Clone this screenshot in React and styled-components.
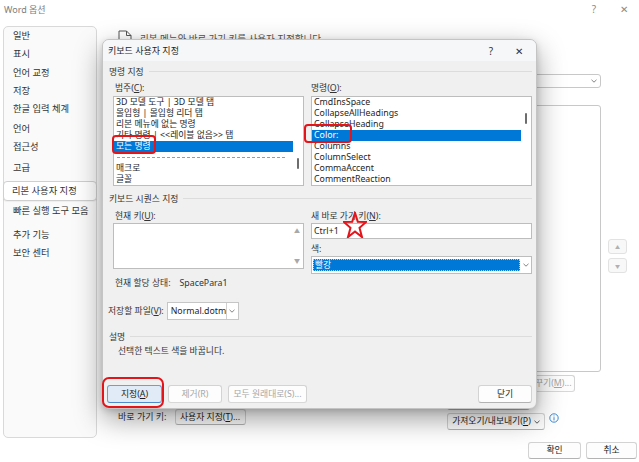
import React from "react";
import styled, { createGlobalStyle } from "styled-components";

const Global = createGlobalStyle`
  html, body { margin: 0; padding: 0; background: #fff; }
  body { font-family: "Noto Sans", "Noto Sans CJK KR", sans-serif; }
  * { box-sizing: border-box; }
  u { text-decoration: underline; text-underline-offset: 1px; }
`;

const Page = styled.div`
  position: relative;
  width: 639px;
  height: 462px;
  overflow: hidden;
  background: #fff;
  color: #222;
  font-size: 9px;
  font-family: "Noto Sans", "Noto Sans CJK KR", sans-serif;
`;

const WinHeader = styled.div`
  height: 22px;
  display: flex;
  align-items: center;
  justify-content: space-between;
  padding: 0 11px 4px 4px;
`;
const WinTitle = styled.div`
  color: #7d7d7d;
  font-size: 9px;
`;
const HeaderControls = styled.div`
  display: flex;
  align-items: center;
  gap: 24px;
  color: #8a8a8a;
  font-size: 10px;
`;

const Body = styled.div`
  display: flex;
  padding-left: 3px;
`;

const Nav = styled.div`
  margin-top: 4px;
  width: 94px;
  height: 412px;
  border: 1px solid #d9d9d9;
  border-radius: 5px;
  background: #fafafa;
  display: flex;
  flex-direction: column;
`;
const NavItem = styled.div`
  height: ${(p) => (p.$sel ? 20 : 18)}px;
  line-height: 18px;
  margin-top: ${(p) => p.$mt || 0}px;
  padding-left: ${(p) => (p.$sel ? 8 : 9)}px;
  color: #333;
  font-size: 9.3px;
  white-space: nowrap;
  ${(p) =>
    p.$sel &&
    `background:#fff;border:1px solid #cfcfcf;border-radius:4px;margin-left:-1px;margin-right:-1px;box-shadow:0 1px 1px rgba(0,0,0,0.05);`}
`;

const Main = styled.div`
  flex: 1;
  display: flex;
  flex-direction: column;
`;
const DocRow = styled.div`
  margin: 8px 0 0 21px;
  height: 15px;
  display: flex;
  align-items: center;
  gap: 8px;
  color: #555;
  font-size: 9.5px;
`;
const RightCol = styled.div`
  margin-left: 253px;
  display: flex;
  flex-direction: column;
`;
const Dropdown = styled.div`
  margin-top: 29px;
  width: 251px;
  height: 14px;
  border: 1px solid #c8c8c8;
  border-radius: 3px;
  background: #fff;
  display: flex;
  align-items: center;
  justify-content: flex-end;
  padding-right: 3px;
`;
const TreeRow = styled.div`
  margin-top: 17px;
  display: flex;
  gap: 7px;
`;
const TreeBox = styled.div`
  width: 251px;
  height: 267px;
  border: 1px solid #c8c8c8;
  border-radius: 3px;
  background: #fff;
`;
const SideButtons = styled.div`
  margin-top: 134px;
  display: flex;
  flex-direction: column;
  gap: 4px;
`;
const SideBtn = styled.div`
  width: 19px;
  height: 15px;
  border: 1px solid #e2e2e2;
  border-radius: 3px;
  background: #f8f8f8;
  color: #b0b0b0;
  font-size: 5px;
  display: flex;
  align-items: center;
  justify-content: center;
`;
const RenameRow = styled.div`
  margin-top: 3px;
  padding-left: 155px;
  height: 17px;
`;
const BottomRow = styled.div`
  margin-top: 1px;
  display: flex;
`;
const LeftBlock = styled.div`
  width: 350px;
  padding: 16px 0 0 21px;
  display: flex;
  align-items: flex-start;
  gap: 8px;
`;
const PlainLabel = styled.span`
  line-height: 16px;
  color: #333;
`;
const RightBlock = styled.div`
  display: flex;
  flex-direction: column;
  gap: 3px;
`;
const InlineRow = styled.div`
  display: flex;
  align-items: flex-start;
  gap: 4px;
`;
const OkRow = styled.div`
  margin-top: 12px;
  display: flex;
  justify-content: flex-end;
  gap: 5px;
  padding-right: 2px;
`;

const Btn = styled.button`
  width: ${(p) => p.$w}px;
  height: ${(p) => p.$h || 17}px;
  padding: 0;
  margin: 0;
  font-family: inherit;
  font-size: 8.8px;
  color: ${(p) => (p.$off ? "#a6a6a6" : "#1d1d1d")};
  background: ${(p) => (p.$primary ? "#e0ebf7" : "#fdfdfd")};
  border: 1px solid ${(p) => (p.$primary ? "#6aa0d8" : "#d3d3d3")};
  border-bottom-color: ${(p) => (p.$primary ? "#4f8bcb" : p.$off ? "#d8d8d8" : "#b3b3b3")};
  border-radius: 3px;
  display: inline-flex;
  align-items: center;
  justify-content: ${(p) => (p.$end ? "flex-end" : "center")};
  padding-right: ${(p) => (p.$end ? 5 : 0)}px;
  line-height: 1;
  white-space: nowrap;
  overflow: hidden;
`;
const BtnText = styled.span`
  white-space: nowrap;
`;
const BtnChevron = styled.span`
  display: inline-flex;
  margin-left: 3px;
`;

/* ---------- dialog ---------- */
const Dialog = styled.div`
  position: absolute;
  left: 102px;
  top: 39px;
  width: 435px;
  height: 370px;
  border: 1px solid #c4c4c4;
  border-radius: 7px;
  overflow: hidden;
  background: #f0f0f0;
  box-shadow: 0 10px 28px rgba(0, 0, 0, 0.38), 0 2px 6px rgba(0, 0, 0, 0.15);
  display: flex;
  flex-direction: column;
  color: #1e1e1e;
  font-size: 8.8px;
`;
const DlgTitleBar = styled.div`
  height: 21px;
  flex: none;
  background: #f6f7f9;
  display: flex;
  align-items: center;
  justify-content: space-between;
  padding: 0 13px 0 5px;
  font-size: 9px;
`;
const DlgControls = styled.div`
  display: flex;
  align-items: center;
  gap: 22px;
  color: #333;
  font-size: 10px;
`;
const DlgBody = styled.div`
  flex: 1;
  display: flex;
  flex-direction: column;
  padding: 0 4px 0 5px;
`;
const SectionHead = styled.div`
  margin-top: ${(p) => p.$mt}px;
  height: 14px;
  display: flex;
  align-items: center;
  gap: 5px;
  padding-left: 1px;
  color: #333;
  &::after {
    content: "";
    flex: 1;
    border-top: 1px solid #dcdcdc;
  }
`;
const TwoCol = styled.div`
  display: grid;
  grid-template-columns: 191px 221px;
  column-gap: 7px;
  padding-left: 5px;
  margin-top: ${(p) => p.$mt || 0}px;
`;
const Col = styled.div`
  display: flex;
  flex-direction: column;
`;
const FieldLabel = styled.div`
  height: 14px;
  line-height: 14px;
  padding-left: ${(p) => p.$pl || 0}px;
  margin-top: ${(p) => p.$mt || 0}px;
  color: #333;
  white-space: nowrap;
`;
const ListBox = styled.div`
  position: relative;
  margin-top: 1px;
  height: 90px;
  background: #fff;
  border: 1px solid #bdbdbd;
  overflow: hidden;
  padding: 0 10px 0 0;
`;
const ListRow = styled.div`
  height: 11px;
  line-height: 11px;
  padding-left: 2px;
  white-space: nowrap;
  overflow: hidden;
  background: ${(p) => (p.$sel ? "#0078d7" : "transparent")};
  color: ${(p) => (p.$sel ? "#fff" : "#1e1e1e")};
`;
const DashRow = styled.div`
  height: 11px;
  display: flex;
  align-items: center;
  padding: 0 8px 0 3px;
  &::before {
    content: "";
    flex: 1;
    border-top: 1px dashed #9c9c9c;
  }
`;
const Thumb = styled.div`
  position: absolute;
  right: 4px;
  top: ${(p) => p.$top}px;
  width: 2px;
  height: 11px;
  background: #6d6d6d;
  border-radius: 1px;
`;
const KeyBox = styled.div`
  height: 46px;
  background: #fff;
  border: 1px solid #bdbdbd;
  display: flex;
  justify-content: flex-end;
`;
const Arrows = styled.div`
  width: 12px;
  display: flex;
  flex-direction: column;
  justify-content: space-between;
  align-items: center;
  padding: 3px 0 3px;
  color: #a8a8a8;
  font-size: 6px;
  line-height: 8px;
`;
const TextInput = styled.div`
  height: 16px;
  background: #fff;
  border: 1px solid #bdbdbd;
  line-height: 14px;
  padding-left: 2px;
`;
const ColorSelect = styled.div`
  height: 18px;
  background: #fff;
  border: 1px solid #bdbdbd;
  display: flex;
  padding: 2px 0 2px 1px;
`;
const ColorValue = styled.div`
  flex: 1;
  background: #0078d7;
  color: #fff;
  line-height: 12px;
  padding-left: 2px;
  outline: 1px dotted #f4b5b5;
  outline-offset: -1px;
`;
const ChevronCell = styled.div`
  width: ${(p) => p.$w || 11}px;
  display: flex;
  align-items: center;
  justify-content: center;
  border-left: ${(p) => (p.$sep ? "1px solid #d0d0d0" : "none")};
  align-self: stretch;
`;
const StatusLine = styled.div`
  margin-top: 7px;
  height: 14px;
  line-height: 14px;
  padding-left: 2px;
  display: flex;
  gap: 9px;
  color: #333;
`;
const FileRow = styled.div`
  margin-top: 12px;
  display: flex;
  align-items: center;
  gap: 3px;
`;
const FileSelect = styled.div`
  width: 72px;
  height: 18px;
  background: #fff;
  border: 1px solid #c6c6c6;
  display: flex;
  align-items: stretch;
`;
const FileValue = styled.div`
  flex: 1;
  line-height: 16px;
  padding-left: 3px;
  white-space: nowrap;
  overflow: hidden;
`;
const Description = styled.div`
  margin-top: 1px;
  height: 14px;
  line-height: 14px;
  padding-left: 10px;
  color: #333;
`;
const DlgButtons = styled.div`
  margin-top: 27px;
  margin-left: -1px;
  display: flex;
  align-items: center;
  gap: 6px;
`;
const Spacer = styled.div`
  flex: 1;
`;

/* ---------- annotations ---------- */
const RedBox = styled.div`
  position: absolute;
  left: ${(p) => p.$x}px;
  top: ${(p) => p.$y}px;
  width: ${(p) => p.$w}px;
  height: ${(p) => p.$h}px;
  border: 2px solid #e4141b;
  border-radius: ${(p) => p.$r || 4}px;
  pointer-events: none;
`;
const StarWrap = styled.div`
  position: absolute;
  left: 343px;
  top: 212px;
  width: 24px;
  height: 26px;
  pointer-events: none;
`;

const Chevron = ({ color = "#777" }) => (
  <svg width="6" height="4" viewBox="0 0 6 4">
    <path d="M0.5 0.8 L3 3.2 L5.5 0.8" fill="none" stroke={color} strokeWidth="0.9" />
  </svg>
);

const DocIcon = () => (
  <svg width="14" height="16" viewBox="0 0 14 16">
    <path d="M1 1 H8.5 L13 5.5 V15 H1 Z" fill="#fff" stroke="#555" strokeWidth="1" />
    <path d="M8.5 1 V5.5 H13" fill="none" stroke="#555" strokeWidth="1" />
  </svg>
);

const InfoIcon = () => (
  <svg width="10" height="10" viewBox="0 0 10 10">
    <circle cx="5" cy="5" r="4.2" fill="none" stroke="#2b7cd3" strokeWidth="0.9" />
    <rect x="4.55" y="4.2" width="0.9" height="3.2" fill="#2b7cd3" />
    <rect x="4.55" y="2.5" width="0.9" height="0.9" fill="#2b7cd3" />
  </svg>
);

const categories = [
  "3D 모델 도구 | 3D 모델 탭",
  "몰입형 | 몰입형 리더 탭",
  "리본 메뉴에 없는 명령",
  "기타 명령 | <<레이블 없음>> 탭",
  "모든 명령",
  "---",
  "매크로",
  "글꼴",
];
const commands = [
  "CmdInsSpace",
  "CollapseAllHeadings",
  "CollapseHeading",
  "Color:",
  "Columns",
  "ColumnSelect",
  "CommaAccent",
  "CommentReaction",
];

const navItems = [
  ["일반", 0],
  ["표시", 0],
  ["언어 교정", 1],
  ["저장", 0],
  ["한글 입력 체계", 0],
  ["언어", 2],
  ["접근성", 0],
  ["고급", 3],
  ["리본 사용자 지정", 4, true],
  ["빠른 실행 도구 모음", 1],
  ["추가 기능", 6],
  ["보안 센터", 0],
];

export default function App() {
  return (
    <Page>
      <Global />
      <WinHeader>
        <WinTitle>Word 옵션</WinTitle>
        <HeaderControls>
          <span>?</span>
          <span>✕</span>
        </HeaderControls>
      </WinHeader>
      <Body>
        <Nav>
          {navItems.map(([t, mt, sel]) => (
            <NavItem key={t} $mt={mt} $sel={sel}>
              {t}
            </NavItem>
          ))}
        </Nav>
        <Main>
          <DocRow>
            <DocIcon />
            <span>리본 메뉴와 바로 가기 키를 사용자 지정합니다.</span>
          </DocRow>
          <RightCol>
            <Dropdown>
              <Chevron />
            </Dropdown>
            <TreeRow>
              <TreeBox />
              <SideButtons>
                <SideBtn>▲</SideBtn>
                <SideBtn>▼</SideBtn>
              </SideButtons>
            </TreeRow>
            <RenameRow>
              <Btn $w={70} $off disabled>
                <BtnText>
                  이름 바꾸기(<u>M</u>)...
                </BtnText>
              </Btn>
            </RenameRow>
          </RightCol>
          <BottomRow>
            <LeftBlock>
              <PlainLabel>바로 가기 키:</PlainLabel>
              <Btn $w={71} $h={16}>
                <BtnText>
                  사용자 지정(<u>T</u>)...
                </BtnText>
              </Btn>
            </LeftBlock>
            <RightBlock>
              <Btn $w={83} $end aria-label="원래대로">
                <BtnChevron>
                  <Chevron color="#444" />
                </BtnChevron>
              </Btn>
              <InlineRow>
                <Btn $w={98}>
                  <BtnText>
                    가져오기/내보내기(<u>P</u>)
                  </BtnText>
                  <BtnChevron>
                    <Chevron color="#444" />
                  </BtnChevron>
                </Btn>
                <InfoIcon />
              </InlineRow>
            </RightBlock>
          </BottomRow>
          <OkRow>
            <Btn $w={53}>
              <BtnText>확인</BtnText>
            </Btn>
            <Btn $w={51}>
              <BtnText>취소</BtnText>
            </Btn>
          </OkRow>
        </Main>
      </Body>

      <Dialog>
        <DlgTitleBar>
          <span>키보드 사용자 지정</span>
          <DlgControls>
            <span>?</span>
            <span>✕</span>
          </DlgControls>
        </DlgTitleBar>
        <DlgBody>
          <SectionHead $mt={3}>명령 지정</SectionHead>
          <TwoCol $mt={3}>
            <Col>
              <FieldLabel $pl={2}>
                범주(<u>C</u>):
              </FieldLabel>
              <ListBox>
                {categories.map((c, i) =>
                  c === "---" ? (
                    <DashRow key={i} />
                  ) : (
                    <ListRow key={i} $sel={i === 4}>
                      {c}
                    </ListRow>
                  )
                )}
                <Thumb $top={61} />
              </ListBox>
            </Col>
            <Col>
              <FieldLabel>
                명령(<u>O</u>):
              </FieldLabel>
              <ListBox>
                {commands.map((c, i) => (
                  <ListRow key={i} $sel={i === 3}>
                    {c}
                  </ListRow>
                ))}
                <Thumb $top={16} />
              </ListBox>
            </Col>
          </TwoCol>
          <SectionHead $mt={5}>키보드 시퀀스 지정</SectionHead>
          <TwoCol $mt={4}>
            <Col>
              <FieldLabel $pl={2}>
                현재 키(<u>U</u>):
              </FieldLabel>
              <KeyBox>
                <Arrows>
                  <span>▲</span>
                  <span>▼</span>
                </Arrows>
              </KeyBox>
              <StatusLine>
                <span>현재 할당 상태:</span>
                <span>SpacePara1</span>
              </StatusLine>
            </Col>
            <Col>
              <FieldLabel>
                새 바로 가기 키(<u>N</u>):
              </FieldLabel>
              <TextInput>Ctrl+1</TextInput>
              <FieldLabel $mt={3}>색:</FieldLabel>
              <ColorSelect>
                <ColorValue>빨강</ColorValue>
                <ChevronCell $w={11}>
                  <Chevron />
                </ChevronCell>
              </ColorSelect>
            </Col>
          </TwoCol>
          <FileRow>
            <FieldLabel>
              저장할 파일(<u>V</u>):
            </FieldLabel>
            <FileSelect>
              <FileValue>Normal.dotm</FileValue>
              <ChevronCell $w={12} $sep>
                <Chevron />
              </ChevronCell>
            </FileSelect>
          </FileRow>
          <SectionHead $mt={9}>설명</SectionHead>
          <Description>선택한 텍스트 색을 바꿉니다.</Description>
          <DlgButtons>
            <Btn $w={55} $h={18} $primary>
              <BtnText>
                지정(<u>A</u>)
              </BtnText>
            </Btn>
            <Btn $w={54} $h={18} $off disabled>
              <BtnText>제거(R)</BtnText>
            </Btn>
            <Btn $w={79} $h={18} $off disabled>
              <BtnText>모두 원래대로(S)...</BtnText>
            </Btn>
            <Spacer />
            <Btn $w={54} $h={18}>
              <BtnText>닫기</BtnText>
            </Btn>
          </DlgButtons>
        </DlgBody>
      </Dialog>

      <RedBox $x={112} $y={135} $w={44} $h={19} />
      <RedBox $x={304} $y={124} $w={48} $h={19} />
      <RedBox $x={102} $y={377} $w={62} $h={31} $r={7} />
      <StarWrap>
        <svg width="24" height="26" viewBox="0 0 24 23" preserveAspectRatio="none">
          <polygon
            points="12,0.8 14.8,8.6 23.2,8.8 16.5,14 19,22.2 12,17.3 5,22.2 7.5,14 0.8,8.8 9.2,8.6"
            fill="none"
            stroke="#e4141b"
            strokeWidth="2"
            vectorEffect="non-scaling-stroke"
          />
        </svg>
      </StarWrap>
    </Page>
  );
}
